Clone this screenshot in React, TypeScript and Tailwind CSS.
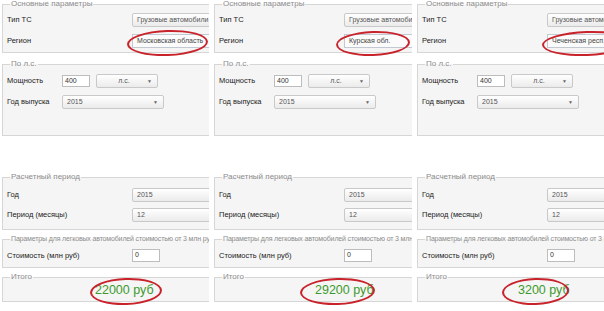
import React from "react";

const FONT = "font-['Liberation_Sans','Noto_Sans',sans-serif]";

function Box({
  legend,
  className = "",
  legendClass = "text-[8px]",
  children,
}: {
  legend: string;
  className?: string;
  legendClass?: string;
  children?: React.ReactNode;
}) {
  return (
    <fieldset
      className={`m-0 w-[280px] border border-[#d6d6d6] bg-[#f5f5f5] pl-[4px] pr-0 pt-0 ${className}`}
    >
      <legend
        className={`ml-[3px] whitespace-nowrap px-[1px] leading-[8px] text-[#8c8c8c] ${legendClass}`}
      >
        {legend}
      </legend>
      {children}
    </fieldset>
  );
}

function Sel({
  w,
  children,
  center = false,
  arrow = true,
  h = "h-[14px]",
}: {
  w: string;
  children: React.ReactNode;
  center?: boolean;
  arrow?: boolean;
  h?: string;
}) {
  return (
    <div
      className={`${w} ${h} flex shrink-0 items-center rounded-[2px] border border-[#c9c9c9] bg-gradient-to-b from-[#ffffff] to-[#ebebeb] pl-[4px] pr-[5px] text-[7px] text-[#555]`}
    >
      <span className={`flex-1 whitespace-nowrap ${center ? "text-center" : ""}`}>{children}</span>
      {arrow && <span className="text-[5px] leading-none text-[#666]">▼</span>}
    </div>
  );
}

function Inp({ w, children, h = "h-[13px]" }: { w: string; children: React.ReactNode; h?: string }) {
  return (
    <div
      className={`${w} ${h} flex shrink-0 items-center border border-[#bdbdbd] bg-white pl-[2px] text-[7px] text-[#333]`}
    >
      {children}
    </div>
  );
}

function Label({ w, children }: { w: string; children: React.ReactNode }) {
  return (
    <div className={`${w} shrink-0 whitespace-nowrap text-[7.5px] text-[#222]`}>{children}</div>
  );
}

type Ell = { l: number; t: number; w: number; h: number };

function Panel({
  width,
  region,
  total,
  totalPad,
  ellRegion,
  ellTotal,
}: {
  width: string;
  region: string;
  total: string;
  totalPad: string;
  ellRegion: Ell;
  ellTotal: Ell;
}) {
  return (
    <div className={`relative h-full ${width} shrink-0 overflow-hidden pl-[2px]`}>
      <Box legend="Основные параметры" className="pb-[4px]">
        <div className="mt-[5px] flex h-[14px] items-center">
          <Label w="w-[125px]">Тип ТС</Label>
          <Sel w="w-[110px]" arrow={false}>Грузовые автомобили</Sel>
        </div>
        <div className="mt-[7px] flex h-[14px] items-center">
          <Label w="w-[125px]">Регион</Label>
          <div className="flex h-[14px] w-[110px] items-center whitespace-nowrap border border-[#c3c9d2] bg-[#fbfbfb] pl-[4px] text-[7px] text-[#444]">
            {region}
          </div>
        </div>
      </Box>

      <Box legend="По л.с." className="mt-[7px] pb-[26px]">
        <div className="mt-[6px] flex h-[14px] items-center">
          <Label w="w-[55px]">Мощность</Label>
          <Inp w="w-[28px]" h="h-[12px]">400</Inp>
          <div className="ml-[6px]">
            <Sel w="w-[62px]" center>
              л.с.
            </Sel>
          </div>
        </div>
        <div className="mt-[7px] flex h-[14px] items-center">
          <Label w="w-[55px]">Год выпуска</Label>
          <Sel w="w-[102px]">2015</Sel>
        </div>
      </Box>

      <Box legend="Расчетный период" className="mt-[37px] pb-[7px]">
        <div className="mt-[7px] flex h-[14px] items-center">
          <Label w="w-[125px]">Год</Label>
          <Sel w="w-[110px]" arrow={false}>2015</Sel>
        </div>
        <div className="mt-[6px] flex h-[14px] items-center">
          <Label w="w-[125px]">Период (месяцы)</Label>
          <Sel w="w-[110px]" arrow={false}>12</Sel>
        </div>
      </Box>

      <Box
        legend="Параметры для легковых автомобилей стоимостью от 3 млн руб"
        legendClass="text-[7px] tracking-[-0.15px]"
        className="mt-[5px] pb-[5px]"
      >
        <div className="mt-[6px] flex h-[13px] items-center">
          <Label w="w-[125px]">Стоимость (млн руб)</Label>
          <Inp w="w-[28px]">0</Inp>
        </div>
      </Box>

      <Box legend="Итого" className="mt-[5px] pb-[2px]">
        <div className={`${totalPad} h-[18px] text-[12.5px] leading-[18px] text-[#3c9a2c]`}>
          {total}
        </div>
      </Box>

      <div
        className="absolute -rotate-2 rounded-[50%] border-2 border-[#c8232b]"
        style={{ left: ellRegion.l, top: ellRegion.t, width: ellRegion.w, height: ellRegion.h }}
      />
      <div
        className="absolute -rotate-2 rounded-[50%] border-2 border-[#c8232b]"
        style={{ left: ellTotal.l, top: ellTotal.t, width: ellTotal.w, height: ellTotal.h }}
      />
    </div>
  );
}

export default function App() {
  return (
    <div className={`flex h-[311px] w-[604px] gap-[3px] overflow-hidden bg-white ${FONT}`}>
      <Panel
        width="w-[209px]"
        region="Московская область"
        total="22000 руб"
        totalPad="pl-[88px]"
        ellRegion={{ l: 127, t: 30, w: 81, h: 26 }}
        ellTotal={{ l: 90, t: 278, w: 72, h: 27 }}
      />
      <Panel
        width="w-[200px]"
        region="Курская обл."
        total="29200 руб"
        totalPad="pl-[96px]"
        ellRegion={{ l: 124, t: 31, w: 74, h: 25 }}
        ellTotal={{ l: 88, t: 278, w: 75, h: 27 }}
      />
      <Panel
        width="w-[189px]"
        region="Чеченская респ."
        total="3200 руб"
        totalPad="pl-[96px]"
        ellRegion={{ l: 127, t: 31, w: 90, h: 25 }}
        ellTotal={{ l: 87, t: 278, w: 67, h: 27 }}
      />
    </div>
  );
}
